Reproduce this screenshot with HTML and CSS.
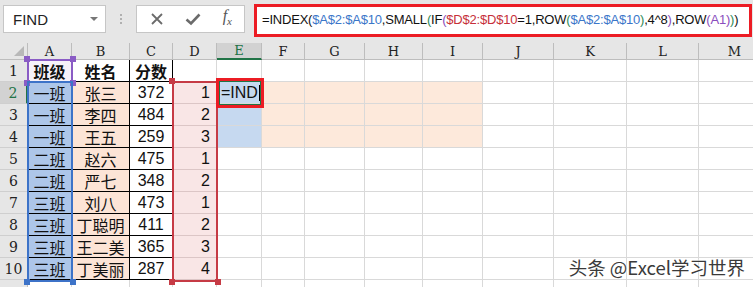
FILE: index.html
```html
<!DOCTYPE html>
<html lang="zh-CN">
<head>
    <meta charset="UTF-8">
    <title>FIND</title>
    <link rel="stylesheet" href="styles.css">
</head>
<body>

<div class="toolbar">
    <div class="name-box">
        <span>FIND</span>
        <span class="drop"></span>
    </div>
    <div class="grip"><i></i><i></i><i></i></div>
    <div class="func-box">
        <svg width="14" height="14" viewBox="0 0 14 14"><path d="M2 2 L12 12 M12 2 L2 12" stroke="#6b6b6b" stroke-width="1.8" fill="none"/></svg>
        <svg width="16" height="14" viewBox="0 0 16 14"><path d="M1.5 7.5 L6 11.5 L14.5 2.5" stroke="#6b6b6b" stroke-width="2.6" fill="none"/></svg>
        <span class="fx">f<sub>x</sub></span>
    </div>
    <div class="formula">
        =INDEX(<span class="blue">$A$2:$A$10</span>,SMALL<span class="green">(</span>IF<span class="purple">(</span><span class="red">$D$2:$D$10</span>=1,ROW<span class="green">(</span><span class="blue">$A$2:$A$10</span><span class="green">)</span>,4^8<span class="purple">)</span>,ROW<span class="purple">(</span><span class="purple">A1</span><span class="purple">)</span><span class="green">)</span>)
    </div>
</div>

<div class="sheet">
    <div class="ch corner"><span class="tri"></span></div>
    <div class="ch">A</div><div class="ch">B</div><div class="ch">C</div><div class="ch">D</div>
    <div class="ch on">E</div><div class="ch">F</div><div class="ch">G</div><div class="ch">H</div>
    <div class="ch">I</div><div class="ch">J</div><div class="ch">K</div><div class="ch">L</div><div class="ch">M</div>

    <div class="rh">1</div>
    <div class="c t b lav">班级</div><div class="c t b">姓名</div><div class="c t b">分数</div>
    <div class="c"></div><div class="c"></div><div class="c"></div><div class="c"></div><div class="c"></div><div class="c"></div><div class="c"></div><div class="c"></div><div class="c"></div><div class="c"></div>

    <div class="rh on">2</div>
    <div class="c t bl">一班</div><div class="c t pk">张三</div><div class="c t num">372</div><div class="c rd r">1</div>
    <div class="c act">=IND<span class="caret"></span></div><div class="c pe"></div><div class="c pe"></div><div class="c pe"></div><div class="c pe"></div><div class="c"></div><div class="c"></div><div class="c"></div><div class="c"></div>

    <div class="rh">3</div>
    <div class="c t bl">一班</div><div class="c t pk">李四</div><div class="c t num">484</div><div class="c rd r">2</div>
    <div class="c sel"></div><div class="c pe"></div><div class="c pe"></div><div class="c pe"></div><div class="c pe"></div><div class="c"></div><div class="c"></div><div class="c"></div><div class="c"></div>

    <div class="rh">4</div>
    <div class="c t bl">一班</div><div class="c t pk">王五</div><div class="c t num">259</div><div class="c rd r">3</div>
    <div class="c sel"></div><div class="c pe"></div><div class="c pe"></div><div class="c pe"></div><div class="c pe"></div><div class="c"></div><div class="c"></div><div class="c"></div><div class="c"></div>

    <div class="rh">5</div>
    <div class="c t bl">二班</div><div class="c t pk">赵六</div><div class="c t num">475</div><div class="c rd r">1</div>
    <div class="c"></div><div class="c"></div><div class="c"></div><div class="c"></div><div class="c"></div><div class="c"></div><div class="c"></div><div class="c"></div><div class="c"></div>

    <div class="rh">6</div>
    <div class="c t bl">二班</div><div class="c t pk">严七</div><div class="c t num">348</div><div class="c rd r">2</div>
    <div class="c"></div><div class="c"></div><div class="c"></div><div class="c"></div><div class="c"></div><div class="c"></div><div class="c"></div><div class="c"></div><div class="c"></div>

    <div class="rh">7</div>
    <div class="c t bl">三班</div><div class="c t pk">刘八</div><div class="c t num">473</div><div class="c rd r">1</div>
    <div class="c"></div><div class="c"></div><div class="c"></div><div class="c"></div><div class="c"></div><div class="c"></div><div class="c"></div><div class="c"></div><div class="c"></div>

    <div class="rh">8</div>
    <div class="c t bl">三班</div><div class="c t pk">丁聪明</div><div class="c t num">411</div><div class="c rd r">2</div>
    <div class="c"></div><div class="c"></div><div class="c"></div><div class="c"></div><div class="c"></div><div class="c"></div><div class="c"></div><div class="c"></div><div class="c"></div>

    <div class="rh">9</div>
    <div class="c t bl">三班</div><div class="c t pk">王二美</div><div class="c t num">365</div><div class="c rd r">3</div>
    <div class="c"></div><div class="c"></div><div class="c"></div><div class="c"></div><div class="c"></div><div class="c"></div><div class="c"></div><div class="c"></div><div class="c"></div>

    <div class="rh">10</div>
    <div class="c t bl">三班</div><div class="c t pk">丁美丽</div><div class="c t num">287</div><div class="c rd r">4</div>
    <div class="c"></div><div class="c"></div><div class="c"></div><div class="c"></div><div class="c"></div><div class="c"></div><div class="c"></div><div class="c"></div><div class="c"></div>

    <div class="rh"></div>
    <div class="c"></div><div class="c"></div><div class="c"></div><div class="c"></div><div class="c"></div><div class="c"></div><div class="c"></div><div class="c"></div><div class="c"></div><div class="c"></div><div class="c"></div><div class="c"></div><div class="c"></div>

    <!-- range highlights drawn over the grid -->
    <div class="range range-a1"><i class="tl"></i><i class="tr"></i><i class="bl"></i><i class="br"></i></div>
    <div class="range range-a"><i class="bl"></i><i class="br"></i></div>
    <div class="range range-d"><i class="tl"></i><i class="bl"></i><i class="br"></i></div>
    <div class="mark-e2"></div>

    <div class="watermark">头条 @Excel学习世界</div>
</div>

</body>
</html>
```

FILE: styles.css
```css
body {
    margin: 0;
    width: 753px;
    height: 287px;
    overflow: hidden;
    background-color: #fff;
    font-family: "Liberation Sans", Arial, sans-serif;
}

/* formula bar */
.toolbar {
    height: 43px;
    background-color: #e6e6e6;
    display: flex;
    align-items: flex-start;
    box-sizing: border-box;
    padding-top: 5px;
}

.name-box {
    margin-left: 3px;
    width: 103px;
    height: 28px;
    background-color: #fff;
    border: 1px solid #c6c6c6;
    box-sizing: border-box;
    display: flex;
    align-items: center;
    justify-content: space-between;
    padding: 0 7px 0 9px;
    font-size: 15px;
    color: #222;
}

.drop {
    width: 0;
    height: 0;
    border-left: 4px solid transparent;
    border-right: 4px solid transparent;
    border-top: 4px solid #777;
}

.grip {
    width: 30px;
    height: 28px;
    display: flex;
    flex-direction: column;
    align-items: center;
    justify-content: center;
    gap: 2px;
}

.grip i {
    width: 2px;
    height: 2px;
    background-color: #b0b0b0;
}

.func-box {
    width: 109px;
    height: 28px;
    background-color: #fff;
    border: 1px solid #c6c6c6;
    box-sizing: border-box;
    display: flex;
    align-items: center;
    justify-content: space-between;
    padding: 0 12px 0 13px;
}

.fx {
    font-family: "Liberation Serif", serif;
    font-style: italic;
    font-size: 16px;
    color: #555;
    margin-top: -4px;
}

.fx sub {
    font-size: 11px;
}

.formula {
    margin-left: 9px;
    margin-top: -1px;
    width: 498px;
    height: 33px;
    border: 3px solid #ec1c24;
    background-color: #fff;
    box-sizing: border-box;
    padding-left: 5px;
    font-size: 13px;
    letter-spacing: -0.2px;
    line-height: 26px;
    white-space: nowrap;
    overflow: hidden;
    color: #111;
}

.blue { color: #3b76c9; }
.red { color: #c62f3a; }
.green { color: #2e8b57; }
.purple { color: #8a4dbd; }

/* grid */
.sheet {
    position: relative;
    display: grid;
    grid-template-columns: 28px 44px 58px 43px 44px 45px 43px 60px 58px 60px 71px 73px 72px 72px;
    grid-template-rows: 17px repeat(10, 22px) 22px;
    height: 244px;
    overflow: hidden;
}

.ch, .rh {
    background-color: #e6e6e6;
    border-right: 1px solid #cfcfcf;
    border-bottom: 1px solid #bdbdbd;
    box-sizing: border-box;
    font-family: "DejaVu Serif", "Liberation Serif", serif;
    font-size: 13px;
    color: #222;
    display: flex;
    align-items: center;
    justify-content: center;
}

.ch {
    border-right-color: #bdbdbd;
}

.rh {
    border-bottom-color: #cfcfcf;
    border-right-color: #bdbdbd;
    font-size: 14px;
}

.ch.on {
    background-color: #d2d2d2;
    border-bottom: 2px solid #217346;
    color: #217346;
}

.rh.on {
    background-color: #d2d2d2;
    border-right: 2px solid #217346;
    color: #217346;
}

.corner {
    position: relative;
}

.tri {
    position: absolute;
    right: 3px;
    bottom: 3px;
    width: 0;
    height: 0;
    border-left: 10px solid transparent;
    border-bottom: 10px solid #b8b8b8;
}

.c {
    border-right: 1px solid #d9d9d9;
    border-bottom: 1px solid #d9d9d9;
    box-sizing: border-box;
    font-family: "Noto Sans CJK SC", "Liberation Sans", sans-serif;
    font-size: 16px;
    color: #111;
    display: flex;
    align-items: center;
    justify-content: center;
    white-space: nowrap;
    overflow: hidden;
}

.c.t {
    border-right-color: #000;
    border-bottom-color: #000;
}

.c.b {
    font-weight: bold;
}

.c.lav { background-color: #f6f2f9; }
.c.bl { background-color: #adc6e9; }
.c.pk { background-color: #fce4d6; }
.c.pe { background-color: #fde9db; }
.c.sel { background-color: #c6d9f0; }

.c.num, .c.r {
    font-family: "Liberation Sans", Arial, sans-serif;
    font-size: 16px;
}

.c.rd {
    background-color: #f9e6e6;
    border-bottom-color: #dcc6c6;
}

.c.r {
    justify-content: flex-end;
    padding-right: 6px;
}

.c.act {
    background-color: #c6d9f0;
    justify-content: flex-start;
    padding-left: 4px;
    font-family: "Liberation Sans", Arial, sans-serif;
    font-size: 16px;
}

.caret {
    width: 1px;
    height: 16px;
    background-color: #000;
    margin-left: 1px;
}

/* reference ranges */
.range {
    position: absolute;
    box-sizing: border-box;
    border: 2px solid;
}

.range i {
    position: absolute;
    width: 6px;
    height: 6px;
}

.range .tl { left: -5px; top: -5px; }
.range .tr { right: -5px; top: -5px; }
.range .bl { left: -5px; bottom: -5px; }
.range .br { right: -5px; bottom: -5px; }

.range-a1 {
    left: 27px;
    top: 16px;
    width: 46px;
    height: 24px;
    border-color: #8a5cc5;
}

.range-a {
    left: 27px;
    top: 38px;
    width: 46px;
    height: 201px;
    border-color: #3d73c8;
}

.range-d {
    left: 172px;
    top: 38px;
    width: 46px;
    height: 201px;
    border-color: #c63b45;
}

.range-a i { background-color: #3d73c8; }
.range-d i { background-color: #c63b45; }
.range-a1 i { background-color: #8a5cc5; }

.mark-e2 {
    position: absolute;
    left: 216px;
    top: 35px;
    width: 48px;
    height: 30px;
    box-sizing: border-box;
    border: 3px solid #ec1c24;
    box-shadow: inset 0 0 0 1px #217346;
}

.watermark {
    position: absolute;
    right: 8px;
    top: 211px;
    font-family: "Noto Sans CJK SC", "Liberation Sans", sans-serif;
    font-size: 18.5px;
    color: #3a3a3a;
    text-shadow: 0 0 2px #fff, 0 0 2px #fff;
    white-space: nowrap;
}
```
